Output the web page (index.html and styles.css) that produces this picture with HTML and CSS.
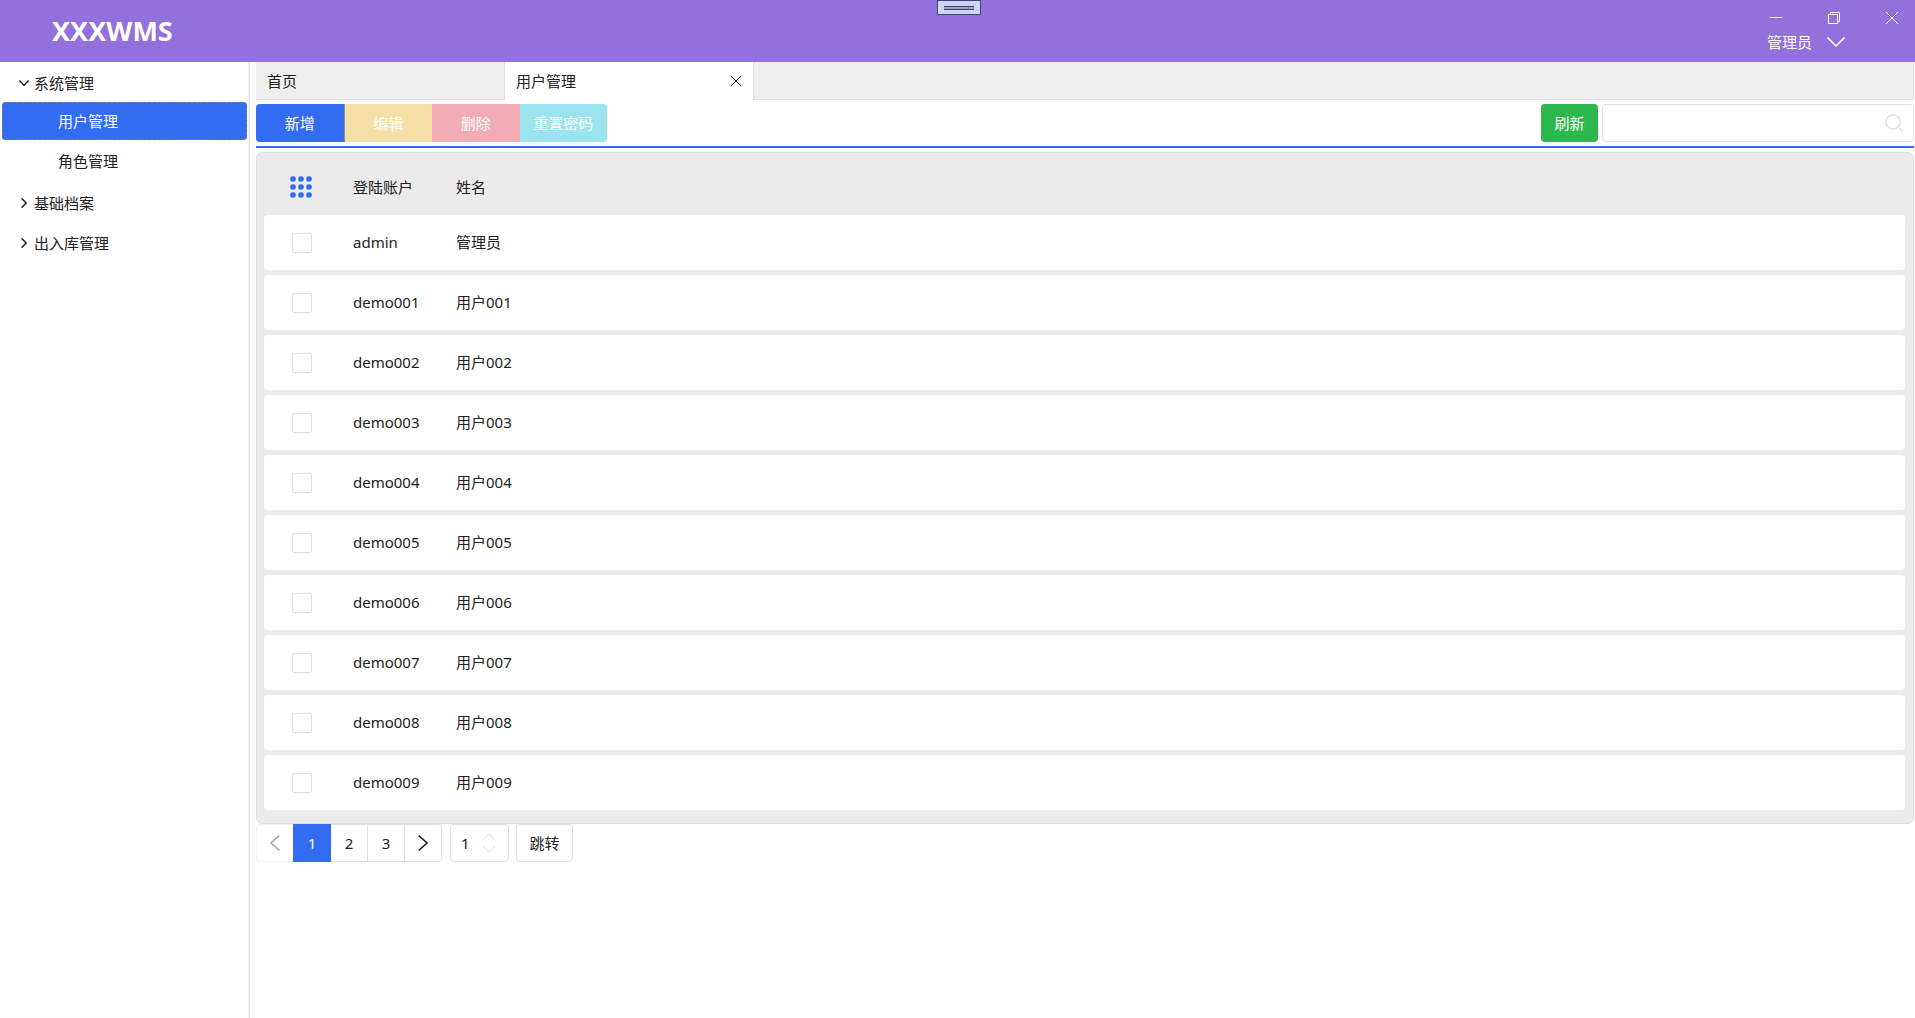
FILE: index.html
```html
<!DOCTYPE html>
<html lang="zh-CN">
<head>
<meta charset="utf-8">
<title>XXXWMS</title>
<link rel="stylesheet" href="styles.css">
</head>
<body>
<header class="topbar">
  <h1 class="brand">XXXWMS</h1>
  <div class="debug-handle"><span class="debug-grip"></span></div>
  <div class="topbar-side">
    <div class="window-buttons">
      <button type="button" class="window-button" aria-label="最小化"><svg width="12" height="12" viewBox="0 0 12 12"><path d="M0 5.5h12"/></svg></button>
      <button type="button" class="window-button" aria-label="还原"><svg width="12" height="12" viewBox="0 0 12 12"><path d="M.5 2.5h9v9h-9zM2.5 2.5v-2h9v9h-2"/></svg></button>
      <button type="button" class="window-button" aria-label="关闭"><svg width="12" height="12" viewBox="0 0 12 12"><path d="M0 0l12 12M12 0L0 12"/></svg></button>
    </div>
    <button type="button" class="user-menu">管理员<svg width="18" height="10" viewBox="0 0 18 10"><path d="M.6.6L9 9 17.400.6"/></svg></button>
  </div>
</header>
<div class="shell">
  <nav class="sidebar">
    <ul class="tree">
      <li>
        <button type="button" class="tree-group" aria-expanded="true"><svg width="10" height="10" viewBox="0 0 10 10"><path d="M.4 2.600L5 7.200l4.600-4.600"/></svg>系统管理</button>
        <ul class="tree-children">
          <li><a href="#users" class="tree-item is-selected">用户管理</a></li>
          <li><a href="#roles" class="tree-item">角色管理</a></li>
        </ul>
      </li>
      <li><button type="button" class="tree-group" aria-expanded="false"><svg width="10" height="10" viewBox="0 0 10 10"><path d="M2.600.4L7.200 5l-4.600 4.600"/></svg>基础档案</button></li>
      <li><button type="button" class="tree-group" aria-expanded="false"><svg width="10" height="10" viewBox="0 0 10 10"><path d="M2.600.4L7.200 5l-4.600 4.600"/></svg>出入库管理</button></li>
    </ul>
  </nav>
  <main class="content">
    <div class="tabs">
      <button type="button" class="tab">首页</button>
      <div class="tab is-active">
        <button type="button" class="tab-label">用户管理</button>
        <button type="button" class="tab-close" aria-label="关闭标签"><svg width="10" height="10" viewBox="0 0 10 10"><path d="M0 0l10 10M10 0L0 10"/></svg></button>
      </div>
      <div class="tabs-rest"></div>
    </div>
    <div class="toolbar">
      <div class="button-group">
        <button type="button" class="action action-add">新增</button>
        <button type="button" class="action action-edit" disabled>编辑</button>
        <button type="button" class="action action-delete" disabled>删除</button>
        <button type="button" class="action action-reset" disabled>重置密码</button>
      </div>
      <div class="search-area">
        <button type="button" class="refresh">刷新</button>
        <div class="search">
          <input type="text" class="search-input" aria-label="搜索">
          <button type="button" class="search-button" aria-label="搜索"><svg width="18" height="18" viewBox="0 0 18 18"><circle cx="8" cy="8" r="7.200"/><path d="M14.500 14.500l3 3"/></svg></button>
        </div>
      </div>
    </div>
    <section class="panel">
      <table class="grid">
        <thead>
          <tr>
            <th class="col-check"><button type="button" class="select-all" aria-label="全选"><svg width="22" height="22" viewBox="0 0 22 22"><circle cx="3" cy="3" r="2.800"/><circle cx="11" cy="3" r="2.800"/><circle cx="19" cy="3" r="2.800"/><circle cx="3" cy="11" r="2.800"/><circle cx="11" cy="11" r="2.800"/><circle cx="19" cy="11" r="2.800"/><circle cx="3" cy="19" r="2.800"/><circle cx="11" cy="19" r="2.800"/><circle cx="19" cy="19" r="2.800"/></svg></button></th>
            <th class="col-account">登陆账户</th>
            <th>姓名</th>
          </tr>
        </thead>
        <tbody>
          <tr><td><input type="checkbox" class="check" aria-label="admin"></td><td>admin</td><td>管理员</td></tr>
          <tr><td><input type="checkbox" class="check" aria-label="demo001"></td><td>demo001</td><td>用户001</td></tr>
          <tr><td><input type="checkbox" class="check" aria-label="demo002"></td><td>demo002</td><td>用户002</td></tr>
          <tr><td><input type="checkbox" class="check" aria-label="demo003"></td><td>demo003</td><td>用户003</td></tr>
          <tr><td><input type="checkbox" class="check" aria-label="demo004"></td><td>demo004</td><td>用户004</td></tr>
          <tr><td><input type="checkbox" class="check" aria-label="demo005"></td><td>demo005</td><td>用户005</td></tr>
          <tr><td><input type="checkbox" class="check" aria-label="demo006"></td><td>demo006</td><td>用户006</td></tr>
          <tr><td><input type="checkbox" class="check" aria-label="demo007"></td><td>demo007</td><td>用户007</td></tr>
          <tr><td><input type="checkbox" class="check" aria-label="demo008"></td><td>demo008</td><td>用户008</td></tr>
          <tr><td><input type="checkbox" class="check" aria-label="demo009"></td><td>demo009</td><td>用户009</td></tr>
        </tbody>
      </table>
    </section>
    <div class="pager">
      <div class="pages">
        <button type="button" class="page" disabled aria-label="上一页"><svg width="10" height="16" viewBox="0 0 10 16"><path d="M9.300.6L.9 8l8.400 7.400"/></svg></button>
        <button type="button" class="page is-current">1</button>
        <button type="button" class="page">2</button>
        <button type="button" class="page">3</button>
        <button type="button" class="page" aria-label="下一页"><svg width="10" height="16" viewBox="0 0 10 16"><path d="M.7.6L9.100 8 .7 15.400"/></svg></button>
      </div>
      <div class="stepper">
        <input type="text" class="stepper-input" value="1" aria-label="页码">
        <div class="stepper-arrows">
          <button type="button" class="stepper-arrow" aria-label="增加"><svg width="14" height="8" viewBox="0 0 14 8"><path d="M.6 7.400L7 .8l6.400 6.600"/></svg></button>
          <button type="button" class="stepper-arrow" aria-label="减少"><svg width="14" height="8" viewBox="0 0 14 8"><path d="M.6.6L7 7.200 13.400.6"/></svg></button>
        </div>
      </div>
      <button type="button" class="jump">跳转</button>
    </div>
  </main>
</div>
</body>
</html>
```
FILE: styles.css
```css
:root {
  --primary: #326cf3;
  --border: #e0e0e0;
  --region: #eeeeee;
  --text: #212121;
}

* { box-sizing: border-box; }

body {
  margin: 0;
  min-height: 100vh;
  display: flex;
  flex-direction: column;
  font: 15px/20px "Noto Sans", "Noto Sans CJK SC", sans-serif;
  font-weight: 400;
  color: var(--text);
  background: #fff;
}

button, input {
  font: inherit;
  color: inherit;
  margin: 0;
  padding: 0;
  border: 0;
  background: none;
}

svg { display: block; fill: none; stroke: currentColor; }
ul { list-style: none; margin: 0; padding: 0; }
a { color: inherit; text-decoration: none; }

/* Title bar */
.topbar {
  position: relative;
  display: flex;
  justify-content: space-between;
  height: 62px;
  background: #9370db;
  color: #fff;
}
.brand { margin: 0; padding-left: 52px; font-size: 27px; line-height: 62px; font-weight: 700; }
.debug-handle {
  position: absolute;
  top: 0;
  left: 50%;
  margin-left: -21px;
  width: 44px;
  height: 15px;
  padding: 5px 6px;
  border: 1px solid #3b4379;
  background: #cdd5f0;
}
.debug-grip { display: block; height: 4px; border: solid #3b4379; border-width: 1px 0; background: #97a3c8; }
.topbar-side { display: flex; flex-direction: column; align-items: flex-end; }
.window-buttons { display: flex; gap: 12px; padding-top: 6px; }
.window-button { display: flex; align-items: center; justify-content: center; width: 46px; height: 24px; }
.user-menu { display: flex; align-items: center; gap: 15px; height: 24px; margin-right: 70px; }
.user-menu svg { stroke-width: 1.5; }

/* Body layout */
.shell { flex: 1; display: flex; }
.sidebar {
  flex: none;
  width: 250px;
  padding: 2px 2px 0;
  border-right: 1px solid #e6e6e6;
  box-shadow: inset -1px 0 1px #f0f0f0;
}
.content { flex: 1; min-width: 0; padding: 0 1px 0 6px; }

.tree, .tree-children { display: flex; flex-direction: column; gap: 2px; }
.tree-children { padding-bottom: 2px; }
.tree-group { display: flex; align-items: center; gap: 5px; width: 100%; height: 38px; padding-left: 17px; }
.tree-group svg { stroke-width: 1.5; }
.tree-item { display: block; padding: 9px 0 9px 56px; border-radius: 4px; }
.tree-item.is-selected { background: var(--primary); color: #fff; outline: 1px dashed #6e7b9c; outline-offset: -1px; }

/* Tabs */
.tabs { display: flex; height: 38px; }
.tab {
  width: 249px;
  padding: 0 11px;
  text-align: left;
  background: var(--region);
  border: solid var(--border);
  border-width: 0 1px 1px 0;
}
.tab.is-active { display: flex; justify-content: space-between; align-items: center; width: 248px; padding-right: 12px; border: 0; background: #fff; }
.tabs-rest { flex: 1; background: var(--region); border: solid var(--border); border-width: 0 1px 1px; }

/* Toolbar */
.toolbar {
  display: flex;
  justify-content: space-between;
  padding: 4px 0;
  border-bottom: 2px solid var(--primary);
}
.button-group { display: flex; width: 351px; border-radius: 4px; overflow: hidden; }
.action { flex: 1; height: 38px; color: #fff; }
.action-add { background: var(--primary); border-right: 1px solid #8c8f97; }
.action-edit { background: #f6dfa6; }
.action-delete { background: #f1adb3; }
.action-reset { background: #99e4ee; }
.search-area { display: flex; gap: 4px; }
.refresh { width: 57px; height: 38px; border-radius: 4px; background: #2db84d; color: #fff; }
.search { display: flex; align-items: center; width: 312px; padding: 0 10px; border: 1px solid var(--border); border-radius: 4px; }
.search-input { flex: 1; min-width: 0; outline: 0; }
.search-button { color: var(--border); }
.search-button svg { stroke-width: 1.5; }

/* Data grid */
.panel {
  margin-top: 4px;
  padding: 3px 8px 8px 7px;
  border: 1px solid var(--border);
  border-radius: 6px;
  background: #ebebeb;
}
.grid { width: 100%; table-layout: fixed; border-spacing: 0 5px; }
.grid th { height: 49px; padding: 2px 0 0; font-weight: 400; text-align: left; }
.grid td { height: 55px; padding: 0 0 2px; background: #fff; }
.grid td:first-child { padding: 0 0 0 28px; border-radius: 4px 0 0 4px; }
.grid td:last-child { border-radius: 0 4px 4px 0; }
.grid .col-check { width: 89px; padding-left: 26px; }
.col-account { width: 103px; }
.select-all { display: block; color: var(--primary); }
.select-all svg { fill: currentColor; stroke: none; }
.check { appearance: none; display: block; width: 20px; height: 20px; border: 1px solid var(--border); border-radius: 2px; background: #fff; }

/* Pagination */
.pager { display: flex; height: 38px; }
.pages { display: flex; }
.page {
  display: flex;
  align-items: center;
  justify-content: center;
  width: 37px;
  border: solid var(--border);
  border-width: 1px 1px 1px 0;
}
.page:first-child { border-width: 1px 0 1px 1px; border-color: #f3f3f3; border-radius: 4px 0 0 4px; color: #a6a6a6; }
.page:last-child { border-radius: 0 4px 4px 0; }
.page svg { stroke-width: 1.5; }
.page.is-current { width: 38px; border: 0; background: var(--primary); color: #fff; }
.stepper { display: flex; align-items: center; width: 59px; margin-left: 8px; padding: 0 12px 0 10px; border: 1px solid var(--border); border-radius: 4px; }
.stepper-input { flex: 1; min-width: 0; outline: 0; }
.stepper-arrows { display: flex; flex-direction: column; gap: 4px; color: var(--border); }
.stepper-arrow { display: block; }
.jump { width: 57px; margin-left: 7px; border: 1px solid var(--border); border-radius: 4px; }
```
